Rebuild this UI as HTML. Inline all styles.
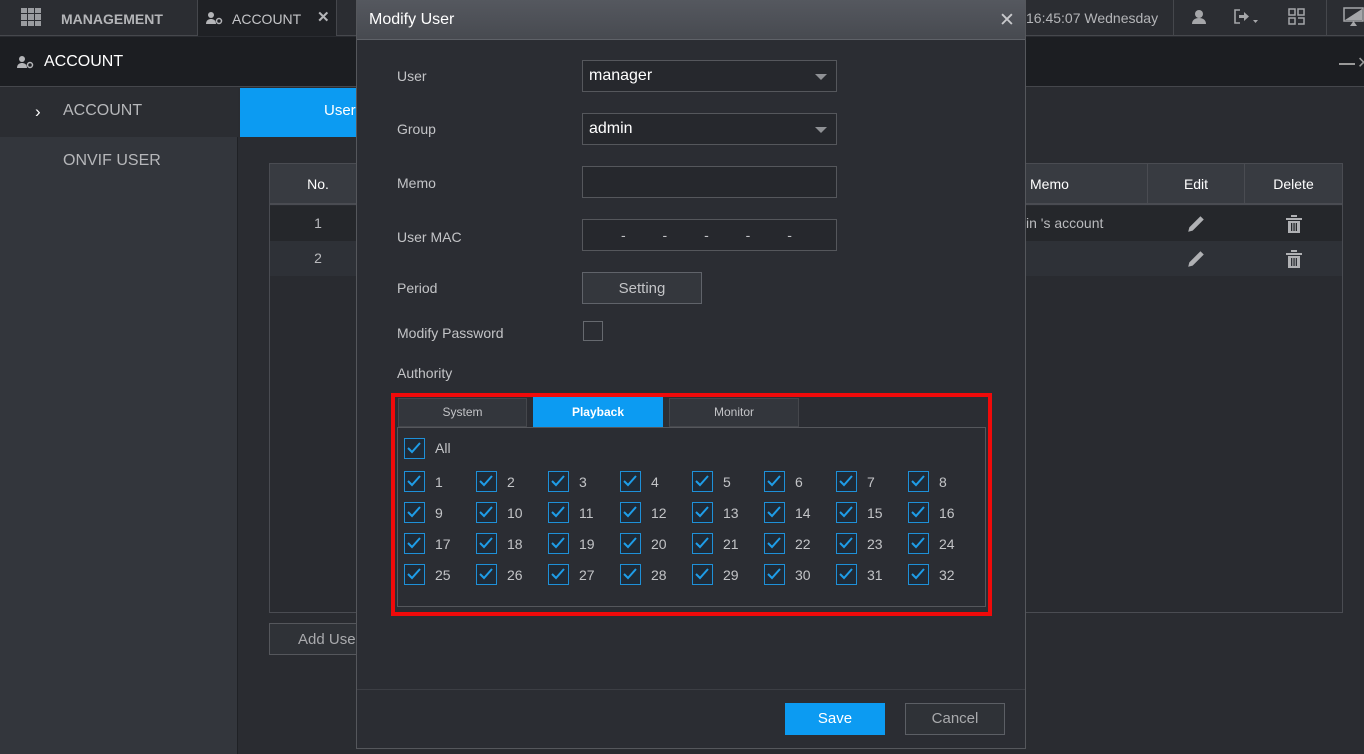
<!DOCTYPE html>
<html><head><meta charset="utf-8"><style>
*{margin:0;padding:0;box-sizing:border-box}
body{width:1364px;height:754px;overflow:hidden;background:#2a2c31;font-family:"Liberation Sans",Arial,sans-serif;position:relative;color:#c8c9cc}
.a{position:absolute;white-space:nowrap}
.cb{position:absolute;width:21px;height:21px;border:1.5px solid #1e90d8;background:#1f2a36}
.cb svg{position:absolute;left:2px;top:2px}
.lb{position:absolute;font-size:14px;color:#c3c4c7;white-space:nowrap}
.tbl{font-size:14px;color:#fff;text-align:center}
</style></head><body>
<div class="a" style="left:0;top:0;width:1364px;height:36px;background:#2b2d32;border-bottom:1px solid #46484d"></div>
<div class="a" style="left:21px;top:8px;width:20px;height:18px;display:grid;grid-template-columns:repeat(3,6px);gap:1px">
<i style="background:#9a9ca0"></i><i style="background:#9a9ca0"></i><i style="background:#9a9ca0"></i><i style="background:#9a9ca0"></i><i style="background:#9a9ca0"></i><i style="background:#9a9ca0"></i><i style="background:#9a9ca0"></i><i style="background:#9a9ca0"></i><i style="background:#9a9ca0"></i></div>
<div class="a" style="left:61px;top:11px;font-size:14px;font-weight:bold;color:#b4b5b8">MANAGEMENT</div>
<div class="a" style="left:197px;top:0;width:140px;height:36px;background:#1f2125;border-left:1px solid #45474c;border-right:1px solid #45474c"></div>
<svg class="a" style="left:206px;top:11px" width="18" height="14" viewBox="0 0 18 14"><circle cx="5" cy="4" r="3" fill="#b4b5b8"/><path d="M0 13c0-4 3-5 5-5s5 1 5 5z" fill="#b4b5b8"/><circle cx="13" cy="10" r="2.5" fill="none" stroke="#b4b5b8" stroke-width="1.5"/></svg>
<div class="a" style="left:232px;top:11px;font-size:14px;color:#c4c5c8">ACCOUNT</div>
<div class="a" style="left:317px;top:8px;font-size:15px;font-weight:bold;color:#b4b5b8">✕</div>
<div class="a" style="left:1026px;top:10px;font-size:14px;color:#b4b5b8">16:45:07 Wednesday</div>
<div class="a" style="left:1173px;top:0;width:1px;height:36px;background:#45474c"></div>
<div class="a" style="left:1326px;top:0;width:1px;height:36px;background:#45474c"></div>
<svg class="a" style="left:1191px;top:9px" width="16" height="16" viewBox="0 0 16 16"><circle cx="8" cy="5" r="4" fill="#a5a6a9"/><path d="M1 15c0-4 3-6 7-6s7 2 7 6z" fill="#a5a6a9"/></svg>
<svg class="a" style="left:1233px;top:8px" width="26" height="18" viewBox="0 0 26 18"><path d="M7 2H2v13h5" fill="none" stroke="#a5a6a9" stroke-width="1.6"/><path d="M6 7h5V4l5 4.5-5 4.5V10H6z" fill="#a5a6a9"/><path d="M20 12h5l-2.5 3z" fill="#a5a6a9"/></svg>
<svg class="a" style="left:1288px;top:8px" width="17" height="17" viewBox="0 0 17 17" fill="none" stroke="#a5a6a9" stroke-width="1.5"><rect x="1" y="1" width="6" height="6"/><rect x="10" y="1" width="6" height="6"/><rect x="1" y="10" width="6" height="6"/><path d="M10 10h6v6h-6"/></svg>
<svg class="a" style="left:1343px;top:7px" width="21" height="20" viewBox="0 0 21 20"><rect x="1" y="1" width="19" height="13" fill="none" stroke="#a5a6a9" stroke-width="1.5"/><path d="M19 2L2 13h17z" fill="#a5a6a9"/><path d="M7 19l3.5-5 3.5 5z" fill="#a5a6a9"/></svg>
<div class="a" style="left:0;top:37px;width:1364px;height:50px;background:#1c1e22;border-bottom:1px solid #45474c"></div>
<svg class="a" style="left:17px;top:55px" width="18" height="14" viewBox="0 0 18 14"><circle cx="5" cy="4" r="3" fill="#b4b5b8"/><path d="M0 13c0-4 3-5 5-5s5 1 5 5z" fill="#b4b5b8"/><circle cx="13" cy="10" r="2.5" fill="none" stroke="#b4b5b8" stroke-width="1.5"/></svg>
<div class="a" style="left:44px;top:53px;font-size:16px;color:#fff">ACCOUNT</div>
<div class="a" style="left:1339px;top:63px;width:16px;height:2px;background:#999"></div>
<div class="a" style="left:1357px;top:53px;font-size:16px;color:#999">✕</div>
<div class="a" style="left:0;top:88px;width:238px;height:666px;background:#33363c;border-right:1px solid #1f2125"></div>
<div class="a" style="left:0;top:88px;width:238px;height:49px;background:#2b2d32"></div>
<div class="a" style="left:35px;top:102px;font-size:17px;color:#fff">›</div>
<div class="a" style="left:63px;top:102px;font-size:16px;color:#b6b7ba">ACCOUNT</div>
<div class="a" style="left:63px;top:152px;font-size:16px;color:#b6b7ba">ONVIF USER</div>
<div class="a" style="left:240px;top:88px;width:120px;height:49px;background:#0c9bf2"></div>
<div class="a" style="left:324px;top:102px;font-size:15px;color:#fff">User</div>
<div class="a" style="left:269px;top:163px;width:1074px;height:450px;border:1px solid #4a4c52;background:#292b30"></div>
<div class="a" style="left:270px;top:164px;width:1072px;height:41px;background:#383b41;border-bottom:2px solid #4a4c52"></div>
<div class="a" style="left:270px;top:206px;width:1072px;height:35px;background:#25272b"></div>
<div class="a" style="left:270px;top:241px;width:1072px;height:35px;background:#2e3137"></div>
<div class="a" style="left:1147px;top:164px;width:1px;height:41px;background:#4a4c52"></div>
<div class="a" style="left:1244px;top:164px;width:1px;height:41px;background:#4a4c52"></div>
<div class="a tbl" style="left:298px;top:176px;width:40px">No.</div>
<div class="a tbl" style="left:298px;top:215px;width:40px;color:#b9babd">1</div>
<div class="a tbl" style="left:298px;top:250px;width:40px;color:#b9babd">2</div>
<div class="a tbl" style="left:1030px;top:176px">Memo</div>
<div class="a tbl" style="left:1148px;top:176px;width:96px">Edit</div>
<div class="a tbl" style="left:1245px;top:176px;width:97px">Delete</div>
<div class="a" style="left:1026px;top:215px;font-size:14px;color:#b9babd">in 's account</div>
<svg class="a" style="left:1186px;top:214px" width="20" height="20" viewBox="0 0 18 18"><path d="M2 16l1-4L13 2l3 3L6 15z" fill="#b0b1b4"/></svg>
<svg class="a" style="left:1186px;top:249px" width="20" height="20" viewBox="0 0 18 18"><path d="M2 16l1-4L13 2l3 3L6 15z" fill="#b0b1b4"/></svg>
<svg class="a" style="left:1286px;top:215px" width="16" height="18" viewBox="0 0 16 18" fill="#b0b1b4"><rect x="5" y="0" width="6" height="2"/><rect x="0" y="3" width="16" height="2"/><path d="M2 6h12v12H2z"/><path d="M5 8h1.3v8H5zM7.4 8h1.3v8H7.4zM9.7 8h1.3v8H9.7z" fill="#26282c"/></svg>
<svg class="a" style="left:1286px;top:250px" width="16" height="18" viewBox="0 0 16 18" fill="#b0b1b4"><rect x="5" y="0" width="6" height="2"/><rect x="0" y="3" width="16" height="2"/><path d="M2 6h12v12H2z"/><path d="M5 8h1.3v8H5zM7.4 8h1.3v8H7.4zM9.7 8h1.3v8H9.7z" fill="#2e3137"/></svg>
<div class="a" style="left:269px;top:623px;width:100px;height:32px;border:1px solid #55575c;background:#2f3237"></div>
<div class="a" style="left:298px;top:631px;font-size:15px;color:#a9aaad">Add User</div>
<div class="a" style="left:356px;top:0;width:670px;height:749px;background:#2b2d33;border:1px solid #55575c"></div>
<div class="a" style="left:357px;top:0;width:668px;height:40px;background:linear-gradient(#55585f,#474a50);border-bottom:1px solid #5f6268"></div>
<div class="a" style="left:369px;top:11px;font-size:16px;color:#fff">Modify User</div>
<div class="a" style="left:999px;top:9px;font-size:19px;color:#c8c9cc">✕</div>
<div class="a lb" style="left:397px;top:68px">User</div>
<div class="a lb" style="left:397px;top:121px">Group</div>
<div class="a lb" style="left:397px;top:175px">Memo</div>
<div class="a lb" style="left:397px;top:229px">User MAC</div>
<div class="a lb" style="left:397px;top:280px">Period</div>
<div class="a lb" style="left:397px;top:325px">Modify Password</div>
<div class="a lb" style="left:397px;top:365px">Authority</div>
<div class="a" style="left:582px;top:60px;width:255px;height:32px;border:1px solid #55575c;background:#26282d"></div>
<div class="a" style="left:589px;top:67px;font-size:16px;color:#fff">manager</div>
<div class="a" style="left:815px;top:74px;border:6px solid transparent;border-top:6px solid #8f9195"></div>
<div class="a" style="left:582px;top:113px;width:255px;height:32px;border:1px solid #55575c;background:#26282d"></div>
<div class="a" style="left:589px;top:120px;font-size:16px;color:#fff">admin</div>
<div class="a" style="left:815px;top:127px;border:6px solid transparent;border-top:6px solid #8f9195"></div>
<div class="a" style="left:582px;top:166px;width:255px;height:32px;border:1px solid #55575c;background:#26282d"></div>
<div class="a" style="left:582px;top:219px;width:255px;height:32px;border:1px solid #55575c;background:#26282d"></div>
<div class="a" style="left:621px;top:227px;font-size:14px;color:#c3c4c7;word-spacing:33px">- - - - -</div>
<div class="a" style="left:582px;top:272px;width:120px;height:32px;border:1px solid #60636a;background:#34373d;color:#c3c4c7;font-size:15px;text-align:center;line-height:32px">Setting</div>
<div class="a" style="left:583px;top:321px;width:20px;height:20px;border:1px solid #66696f"></div>
<div class="a" style="left:391px;top:393px;width:601px;height:223px;border:4px solid #f00a0a"></div>
<div class="a" style="left:397px;top:427px;width:589px;height:180px;border:1px solid #55575c;background:#2b2d33"></div>
<div class="a" style="left:398px;top:398px;width:129px;height:29px;background:#33363c;border:1px solid #45474c;color:#c3c4c7;font-size:12px;text-align:center;line-height:27px">System</div>
<div class="a" style="left:533px;top:397px;width:130px;height:30px;background:#0c9bf2;color:#fff;font-size:12px;font-weight:bold;text-align:center;line-height:30px">Playback</div>
<div class="a" style="left:669px;top:398px;width:130px;height:29px;background:#33363c;border:1px solid #45474c;color:#c3c4c7;font-size:12px;text-align:center;line-height:27px">Monitor</div>
<div id="cbs">
<div class="cb" style="left:404px;top:438px"><svg width="14" height="14" viewBox="0 0 14 14"><path d="M1 7l4 4 8-9" fill="none" stroke="#1e9de8" stroke-width="2"/></svg></div><div class="lb" style="left:435px;top:440px">All</div>
</div>
<div class="a" style="left:357px;top:689px;width:668px;height:1px;background:#3c3e44"></div>
<div class="a" style="left:785px;top:703px;width:100px;height:32px;background:#0c9bf2;color:#fff;font-size:15px;text-align:center;line-height:32px">Save</div>
<div class="a" style="left:905px;top:703px;width:100px;height:32px;border:1px solid #5c5f65;background:#2f3237;color:#a9aaad;font-size:15px;text-align:center;line-height:30px">Cancel</div>
<script>
var h='';var xs=[404,476,548,620,692,764,836,908],ys=[471,502,533,564],n=1;
for(var r=0;r<4;r++)for(var c=0;c<8;c++){h+='<div class="cb" style="left:'+xs[c]+'px;top:'+ys[r]+'px"><svg width="14" height="14" viewBox="0 0 14 14"><path d="M1 7l4 4 8-9" fill="none" stroke="#1e9de8" stroke-width="2"/></svg></div><div class="lb" style="left:'+(xs[c]+31)+'px;top:'+(ys[r]+3)+'px">'+n+'</div>';n++;}
document.getElementById('cbs').insertAdjacentHTML('beforeend',h);
</script>
</body></html>
